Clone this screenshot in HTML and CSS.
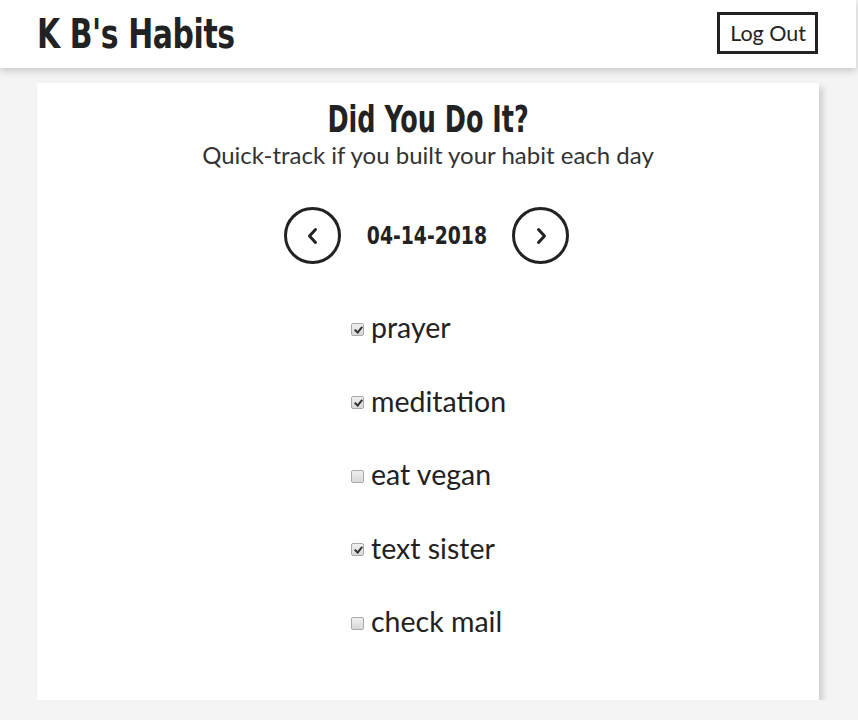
FILE: index.html
```html
<!DOCTYPE html>
<html>
<head>
<meta charset="utf-8">
<link rel="stylesheet" href="styles.css">
</head>
<body>
<div class="page">
  <header class="topbar">
    <h1 class="brand"><span class="narrow">K B's Habits</span></h1>
    <button class="logout">Log Out</button>
  </header>
  <main class="card">
    <h2 class="title"><span class="narrow">Did You Do It?</span></h2>
    <p class="subtitle">Quick-track if you built your habit each day</p>
    <div class="datenav">
      <button class="circle" aria-label="previous day">
        <svg width="20" height="20" viewBox="0 0 20 20"><path d="M12.5 3.5 L6.5 10 L12.5 16.5" fill="none" stroke="#222" stroke-width="3" stroke-linecap="round" stroke-linejoin="round"/></svg>
      </button>
      <span class="date"><span class="narrow">04-14-2018</span></span>
      <button class="circle" aria-label="next day">
        <svg width="20" height="20" viewBox="0 0 20 20"><path d="M7.5 3.5 L13.5 10 L7.5 16.5" fill="none" stroke="#222" stroke-width="3" stroke-linecap="round" stroke-linejoin="round"/></svg>
      </button>
    </div>
    <ul class="habits">
      <li><label><input type="checkbox" checked><span>prayer</span></label></li>
      <li><label><input type="checkbox" checked><span>meditation</span></label></li>
      <li><label><input type="checkbox"><span>eat vegan</span></label></li>
      <li><label><input type="checkbox" checked><span>text sister</span></label></li>
      <li><label><input type="checkbox"><span>check mail</span></label></li>
    </ul>
  </main>
</div>
</body>
</html>
```
FILE: styles.css
```css
html, body {
  margin: 0;
  padding: 0;
  background: #f4f4f4;
}
body {
  font-family: "Lato", "Open Sans", sans-serif;
  color: #222;
}
.page {
  width: 856px;
  display: flex;
  flex-direction: column;
}
.narrow {
  display: inline-block;
  white-space: nowrap;
}
.topbar {
  height: 68px;
  background: #fff;
  box-shadow: 0 3px 7px rgba(0,0,0,0.18);
  display: flex;
  align-items: center;
  justify-content: space-between;
  padding: 0 38px 0 37px;
  box-sizing: border-box;
  position: relative;
  z-index: 1;
}
.brand {
  margin: 0;
  font-family: "DejaVu Sans Condensed", "DejaVu Sans", sans-serif;
  font-weight: bold;
  font-size: 41px;
  letter-spacing: -0.5px;
  color: #222;
  line-height: 1;
  width: 200px;
  white-space: nowrap;
}
.brand .narrow {
  transform: scaleX(0.81);
  transform-origin: left center;
}
.logout {
  font-family: "Lato", sans-serif;
  font-size: 21.5px;
  color: #222;
  background: #fff;
  border: 3px solid #222;
  padding: 5px 9px 5px 10px;
  line-height: 26px;
  margin-top: -2px;
}
.card {
  margin: 15px auto 0;
  width: 782px;
  height: 617px;
  background: #fff;
  box-shadow: 4px 4px 6px rgba(0,0,0,0.15);
  display: flex;
  flex-direction: column;
  align-items: center;
  box-sizing: border-box;
  padding-top: 14px;
}
.title {
  margin: 0;
  font-family: "DejaVu Sans Condensed", "DejaVu Sans", sans-serif;
  font-weight: bold;
  font-size: 38px;
  line-height: 44px;
  color: #222;
  white-space: nowrap;
}
.title .narrow {
  transform: scaleX(0.745);
}
.subtitle {
  margin: 0;
  font-size: 24px;
  line-height: 28px;
  color: #333;
}
.datenav {
  display: flex;
  align-items: center;
  gap: 25px;
  margin-top: 38px;
  margin-left: -3px;
}
.circle {
  width: 57px;
  height: 57px;
  border-radius: 50%;
  border: 3px solid #222;
  background: #fff;
  display: flex;
  align-items: center;
  justify-content: center;
  padding: 0;
  box-sizing: border-box;
}
.date {
  font-family: "DejaVu Sans Condensed", sans-serif;
  font-weight: bold;
  font-size: 25px;
  color: #222;
  width: 121px;
  text-align: center;
  white-space: nowrap;
  display: flex;
  justify-content: center;
}
.date .narrow {
  transform: scaleX(0.835);
}
.habits {
  list-style: none;
  margin: 47px 0 0;
  padding: 0;
  display: flex;
  flex-direction: column;
  gap: 40.5px;
  width: 160px;
  margin-left: 6px;
}
.habits li {
  height: 33px;
}
.habits label {
  display: flex;
  align-items: center;
  gap: 7px;
  font-size: 28.5px;
  line-height: 33px;
  color: #222;
}
.habits input {
  appearance: none;
  -webkit-appearance: none;
  margin: 3px 0 0 0;
  width: 13px;
  height: 13px;
  border: 1px solid #a9a9a9;
  border-radius: 2px;
  background: linear-gradient(#f0f0f0, #d8d8d8);
  box-sizing: border-box;
  position: relative;
  flex: none;
}
.habits input:checked::after {
  content: "";
  position: absolute;
  left: 3.5px;
  top: 1px;
  width: 3px;
  height: 6px;
  border: solid #333;
  border-width: 0 2px 2px 0;
  transform: rotate(40deg);
}
```
